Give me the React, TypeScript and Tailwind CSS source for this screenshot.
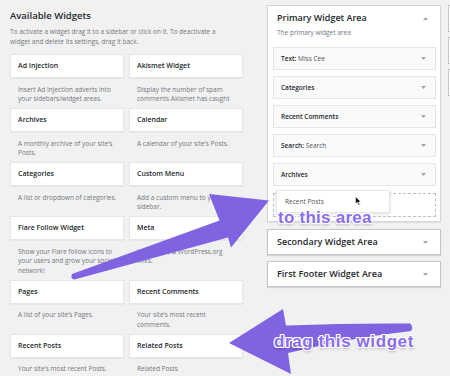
import React from "react";

type Widget = { title: string; desc: string[] };

const widgets: Widget[] = [
  { title: "Ad Injection", desc: ["Insert Ad Injection adverts into", "your sidebars/widget areas."] },
  { title: "Akismet Widget", desc: ["Display the number of spam", "comments Akismet has caught"] },
  { title: "Archives", desc: ["A monthly archive of your site’s", "Posts."] },
  { title: "Calendar", desc: ["A calendar of your site’s Posts."] },
  { title: "Categories", desc: ["A list or dropdown of categories."] },
  { title: "Custom Menu", desc: ["Add a custom menu to your", "sidebar."] },
  { title: "Flare Follow Widget", desc: ["Show your Flare follow icons to", "your users and grow your social", "network!"] },
  { title: "Meta", desc: ["Login, RSS, & WordPress.org", "links."] },
  { title: "Pages", desc: ["A list of your site’s Pages."] },
  { title: "Recent Comments", desc: ["Your site’s most recent", "comments."] },
  { title: "Recent Posts", desc: ["Your site’s most recent Posts."] },
  { title: "Related Posts", desc: ["Related Posts"] },
];

const placed: { name: string; extra?: string }[] = [
  { name: "Text:", extra: "Miss Cee" },
  { name: "Categories" },
  { name: "Recent Comments" },
  { name: "Search:", extra: "Search" },
  { name: "Archives" },
];

function Caret({ up = false }: { up?: boolean }) {
  return (
    <svg width="5" height="3" viewBox="0 0 5 3" className="shrink-0">
      <polygon points={up ? "0,3 5,3 2.5,0" : "0,0 5,0 2.5,3"} fill="#a0a5aa" />
    </svg>
  );
}

function WidgetCard({ w }: { w: Widget }) {
  return (
    <div className="flex flex-col">
      <div className="h-[24px] bg-white border border-[#e5e5e5] shadow-[0_1px_1px_rgba(0,0,0,0.04)] flex items-center px-[7px]">
        <span className="text-[7px] font-semibold text-[#23282d] whitespace-nowrap">{w.title}</span>
      </div>
      <div className="pt-[6.5px] pb-[4.6px] px-[8px] text-[6.5px] leading-[9.5px] text-[#72777c]">
        {w.desc.map((l) => (
          <div key={l} className="whitespace-nowrap">{l}</div>
        ))}
      </div>
    </div>
  );
}

function AreaBox({ title }: { title: string }) {
  return (
    <div className="h-[26px] bg-white border border-[#c5c5c5] shadow-[0_1px_1px_rgba(0,0,0,0.12)] flex items-center justify-between pl-[9px] pr-[12px]">
      <span className="text-[9px] font-semibold text-[#23282d] whitespace-nowrap">{title}</span>
      <Caret />
    </div>
  );
}

export default function App() {
  return (
    <div className="relative w-[450px] h-[376px] overflow-hidden bg-[#f1f1f1] font-['Open_Sans',sans-serif] flex">
      {/* available widgets */}
      <div className="ml-[10px] w-[233px] shrink-0 pt-[10px]">
        <h2 className="text-[9.5px] leading-[12px] font-semibold text-[#23282d]">Available Widgets</h2>
        <p className="mt-[5px] text-[6.5px] leading-[10px] text-[#72777c]">
          To activate a widget drag it to a sidebar or click on it. To deactivate a
          <br />
          widget and delete its settings, drag it back.
        </p>
        <div className="mt-[7px] grid grid-cols-[114px_114px] gap-x-[5px]">
          {widgets.map((w) => (
            <WidgetCard key={w.title} w={w} />
          ))}
        </div>
      </div>

      {/* sidebars */}
      <div className="ml-[24px] w-[174px] shrink-0 pt-[5px] flex flex-col">
        <div className="bg-white border border-[#d4d4d4] shadow-[0_1px_1px_rgba(0,0,0,0.06)] pb-[4px]">
          <div className="flex items-center justify-between pl-[9px] pr-[12px] pt-[6px]">
            <h3 className="text-[9px] leading-[12px] font-semibold text-[#23282d]">Primary Widget Area</h3>
            <Caret up />
          </div>
          <p className="mt-[4px] pl-[9px] text-[6.5px] leading-[10px] text-[#72777c]">The primary widget area</p>
          <div className="mt-[9px] pl-[5px] pr-[4px] flex flex-col gap-[6px]">
            {placed.map((p) => (
              <div
                key={p.name}
                className="h-[23px] bg-[#fafafa] border border-[#e5e5e5] flex items-center justify-between pl-[7px] pr-[9px]"
              >
                <span className="text-[6.5px] font-semibold text-[#23282d] whitespace-nowrap">
                  {p.name}
                  {p.extra && <span className="font-normal text-[#555]"> {p.extra}</span>}
                </span>
                <Caret />
              </div>
            ))}
            <div className="relative mt-[1px] h-[24px] border border-dashed border-[#c0c0c0]">
              <div className="absolute left-[2px] top-[-4px] w-[114px] h-[23px] bg-white border border-[#e8e8e8] shadow-[0_1px_3px_rgba(0,0,0,0.15)] flex items-center pl-[8px]">
                <span className="text-[6.5px] text-[#555] whitespace-nowrap">Recent Posts</span>
              </div>
              <svg className="absolute left-[81px] top-[2px]" width="7" height="10" viewBox="0 0 7 10">
                <path d="M0.5 0.5 L0.5 8 L2.3 6.3 L3.6 9.3 L4.8 8.8 L3.6 5.9 L6 5.9 Z" fill="#111" stroke="#fff" strokeWidth="0.6" />
              </svg>
            </div>
          </div>
        </div>
        <div className="mt-[7px]">
          <AreaBox title="Secondary Widget Area" />
        </div>
        <div className="mt-[6px]">
          <AreaBox title="First Footer Widget Area" />
        </div>
      </div>

      {/* next column, cut off */}
      <div className="ml-[7px] w-[150px] shrink-0 pt-[5px] flex flex-col gap-[5px]">
        <div className="h-[27px] bg-white border border-[#c5c5c5]" />
        <div className="h-[27px] bg-white border border-[#c5c5c5]" />
        <div className="h-[27px] bg-white border border-[#c5c5c5]" />
      </div>

      {/* annotation arrows */}
      <svg className="absolute inset-0 pointer-events-none" width="450" height="376" viewBox="0 0 450 376">
        <path
          d="M72 274 L219.5 220.5 L209 194 L269 200.5 L231 247.5 L228 237.5 L74.5 279.5 Q70 279 72 274 Z"
          fill="#7f63e0"
        />
        <path
          d="M229 343 L283 309 L286 325.5 Q350 323 410 323.5 Q414 327 411 331 Q350 338 288 353 L291 374 Z"
          fill="#7f63e0"
        />
      </svg>
      <span className="absolute left-[278px] top-[209px] text-[17px] leading-[17px] tracking-[0.25px] font-bold text-[#8a6def] font-['Liberation_Sans',sans-serif] whitespace-nowrap [text-shadow:1px_0_0_#fff,-1px_0_0_#fff,0_1px_0_#fff,0_-1px_0_#fff,1px_1px_0_#fff,-1px_-1px_0_#fff,1px_-1px_0_#fff,-1px_1px_0_#fff,0_2px_3px_rgba(0,0,0,0.3)]">
        to this area
      </span>
      <span className="absolute left-[274px] top-[333px] text-[17px] leading-[17px] tracking-[0.6px] font-bold text-[#8a6def] font-['Liberation_Sans',sans-serif] whitespace-nowrap [text-shadow:1px_0_0_#fff,-1px_0_0_#fff,0_1px_0_#fff,0_-1px_0_#fff,1px_1px_0_#fff,-1px_-1px_0_#fff,1px_-1px_0_#fff,-1px_1px_0_#fff,0_2px_3px_rgba(0,0,0,0.3)]">
        drag this widget
      </span>
    </div>
  );
}
